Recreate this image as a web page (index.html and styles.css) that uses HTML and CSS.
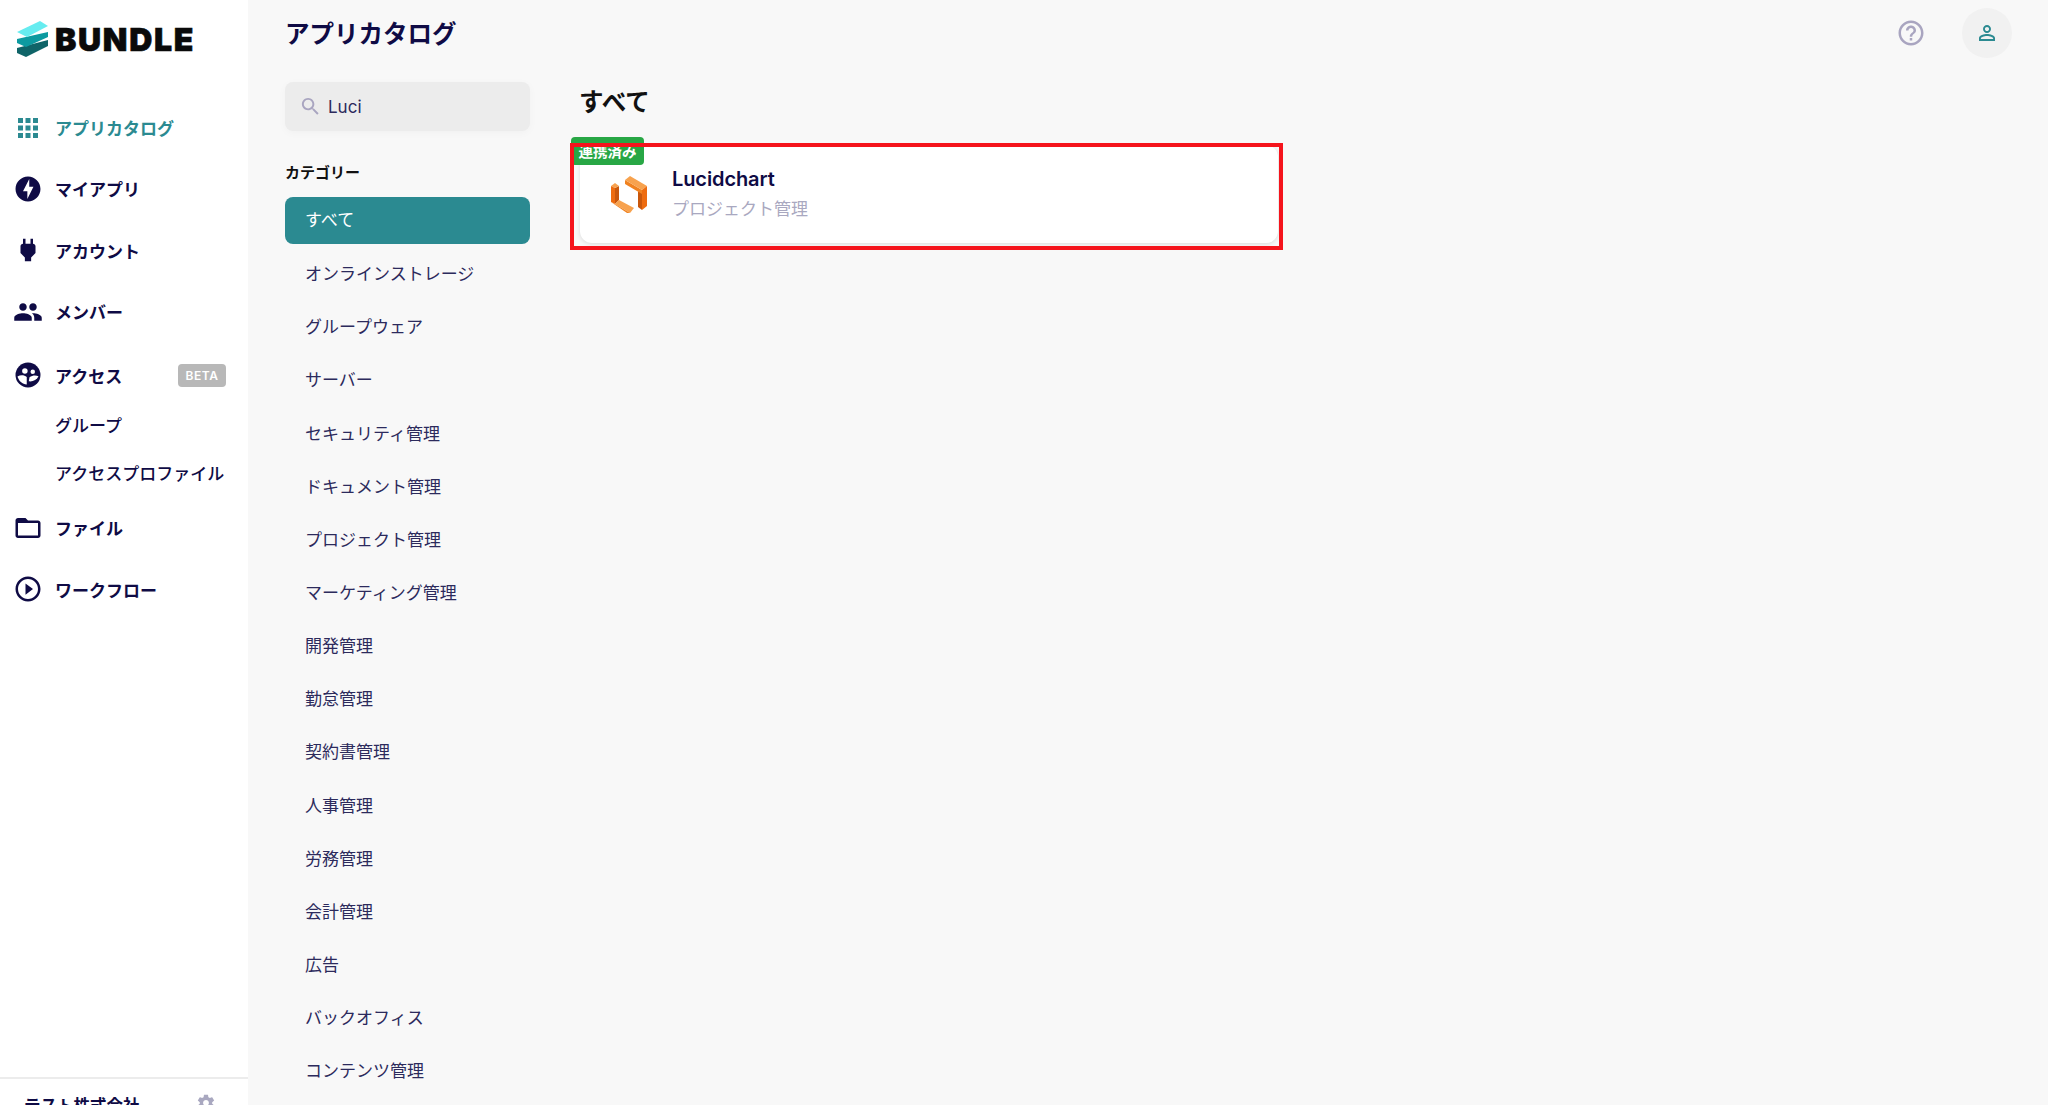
FILE: index.html
```html
<!DOCTYPE html>
<html lang="ja">
<head>
    <meta charset="UTF-8">
    <title>アプリカタログ</title>
    <link rel="stylesheet" href="styles.css">
</head>
<body>
    <aside class="sidebar">
        <div class="logo">
            <svg class="logo-mark" viewBox="0 0 32 36" width="32" height="36">
                <path fill="#0f6468" d="M1 27 L32 19 L32 25 L10 36 L1 32 Z"/>
                <path fill="#0d9aa0" d="M1 18 L32 11 L32 16 L10 26 L1 22 Z"/>
                <path fill="#66ecf0" d="M1 11 L24 0 L32 5 L11 16 Z"/>
            </svg>
            <span class="logo-text">BUNDLE</span>
        </div>
        <nav class="nav">
            <a class="nav-item active">
                <svg class="nav-icon" viewBox="0 0 24 24"><path d="M4 8h4V4H4v4zm6 12h4v-4h-4v4zm-6 0h4v-4H4v4zm0-6h4v-4H4v4zm6 0h4v-4h-4v4zm6-10v4h4V4h-4zm-6 4h4V4h-4v4zm6 6h4v-4h-4v4zm0 6h4v-4h-4v4z"/></svg>
                アプリカタログ
            </a>
            <a class="nav-item">
                <svg class="nav-icon" viewBox="0 0 24 24"><path d="M12 2.02c-5.51 0-9.98 4.47-9.98 9.98s4.47 9.98 9.98 9.98 9.98-4.47 9.98-9.98S17.51 2.02 12 2.02zM11.48 20v-6.26H8L13 4v6.26h3.35L11.48 20z"/></svg>
                マイアプリ
            </a>
            <a class="nav-item">
                <svg class="nav-icon" viewBox="0 0 24 24"><path d="M16.01 7L16 3h-2v4h-4V3H8v4h-.01C7 6.99 6 7.99 6 8.99v5.49L9.5 18v3h5v-3l3.5-3.51v-5.5c0-1-1-2-1.99-1.99z"/></svg>
                アカウント
            </a>
            <a class="nav-item">
                <svg class="nav-icon" viewBox="0 0 24 24"><path d="M16 11c1.66 0 2.99-1.34 2.99-3S17.66 5 16 5c-1.66 0-3 1.34-3 3s1.34 3 3 3zm-8 0c1.66 0 2.99-1.34 2.99-3S9.66 5 8 5C6.34 5 5 6.34 5 8s1.34 3 3 3zm0 2c-2.33 0-7 1.17-7 3.5V19h14v-2.5c0-2.33-4.67-3.5-7-3.5zm8 0c-.29 0-.62.02-.97.05 1.16.84 1.97 1.97 1.97 3.45V19h6v-2.5c0-2.33-4.67-3.5-7-3.5z"/></svg>
                メンバー
            </a>
            <a class="nav-item nav-access">
                <svg class="nav-icon" viewBox="0 0 24 24">
                    <circle cx="12" cy="12" r="10"/>
                    <circle cx="9.5" cy="8.8" r="2.2" fill="#fff"/>
                    <circle cx="15.8" cy="9.4" r="1.8" fill="#fff"/>
                    <path fill="#fff" d="M3.6 13.2 C6 11.8 9 12 11 13.5 L11 19.6 C7.5 19.3 4.5 16.8 3.6 13.2 Z"/>
                    <path fill="#fff" d="M20.4 13 C18.5 12 15.5 12 13.2 13.8 L12.6 17 C15.5 17.6 19 16 20.4 13 Z"/>
                </svg>
                アクセス
                <span class="beta">BETA</span>
            </a>
            <a class="nav-sub">グループ</a>
            <a class="nav-sub">アクセスプロファイル</a>
            <a class="nav-item">
                <svg class="nav-icon" viewBox="0 0 24 24"><path d="M20 6h-8l-2-2H4c-1.1 0-1.99.9-1.99 2L2 18c0 1.1.9 2 2 2h16c1.1 0 2-.9 2-2V8c0-1.1-.9-2-2-2zm0 12H4V8h16v10z"/></svg>
                ファイル
            </a>
            <a class="nav-item">
                <svg class="nav-icon" viewBox="0 0 24 24"><path d="M10 16.5l6-4.5-6-4.5v9zM12 2C6.48 2 2 6.48 2 12s4.48 10 10 10 10-4.48 10-10S17.52 2 12 2zm0 18c-4.41 0-8-3.59-8-8s3.59-8 8-8 8 3.59 8 8-3.59 8-8 8z"/></svg>
                ワークフロー
            </a>
        </nav>
        <div class="org">
            <span>テスト株式会社</span>
            <svg class="org-gear" viewBox="0 0 24 24"><path d="M19.4 13c.04-.32.06-.66.06-1s-.02-.68-.07-1l2.1-1.64c.2-.15.25-.42.13-.64l-2-3.46c-.12-.22-.38-.3-.6-.22l-2.5 1c-.52-.4-1.08-.73-1.69-.98l-.38-2.65C14.46 2.18 14.25 2 14 2h-4c-.25 0-.46.18-.49.42l-.38 2.65c-.61.25-1.17.59-1.69.98l-2.49-1c-.23-.09-.49 0-.61.22l-2 3.46c-.13.22-.07.49.12.64L4.57 11c-.05.32-.07.67-.07 1s.02.68.07 1l-2.11 1.65c-.19.15-.24.42-.12.64l2 3.46c.12.22.38.3.61.22l2.49-1c.52.4 1.08.73 1.69.98l.38 2.65c.03.24.24.42.49.42h4c.25 0 .46-.18.49-.42l.38-2.65c.61-.25 1.17-.59 1.69-.98l2.49 1c.23.09.49 0 .61-.22l2-3.46c.12-.22.07-.49-.12-.64L19.4 13zM12 15.5c-1.93 0-3.5-1.57-3.5-3.5s1.57-3.5 3.5-3.5 3.5 1.57 3.5 3.5-1.57 3.5-3.5 3.5z"/></svg>
        </div>
    </aside>

    <div class="page">
        <header class="topbar">
            <h1>アプリカタログ</h1>
            <div class="top-actions">
                <svg class="help" viewBox="0 0 24 24"><path d="M11 18h2v-2h-2v2zm1-16C6.48 2 2 6.48 2 12s4.48 10 10 10 10-4.48 10-10S17.52 2 12 2zm0 18c-4.41 0-8-3.59-8-8s3.59-8 8-8 8 3.59 8 8-3.59 8-8 8zm0-14c-2.21 0-4 1.79-4 4h2c0-1.1.9-2 2-2s2 .9 2 2c0 2-3 1.75-3 5h2c0-2.25 3-2.5 3-5 0-2.21-1.79-4-4-4z"/></svg>
                <div class="avatar">
                    <svg viewBox="0 0 24 24"><path d="M12 5.9c1.16 0 2.1.94 2.1 2.1s-.94 2.1-2.1 2.1S9.9 9.16 9.9 8s.94-2.1 2.1-2.1m0 9c2.97 0 6.1 1.46 6.1 2.1v1.1H5.9V17c0-.64 3.13-2.1 6.1-2.1M12 4C9.79 4 8 5.79 8 8s1.79 4 4 4 4-1.79 4-4-1.79-4-4-4zm0 9c-2.67 0-8 1.34-8 4v3h16v-3c0-2.66-5.33-4-8-4z"/></svg>
                </div>
            </div>
        </header>
        <div class="content">
            <section class="filters">
                <div class="search">
                    <svg viewBox="0 0 24 24"><path d="M15.5 14h-.79l-.28-.27C15.41 12.59 16 11.11 16 9.5 16 5.91 13.09 3 9.5 3S3 5.91 3 9.5 5.91 16 9.5 16c1.61 0 3.09-.59 4.23-1.57l.27.28v.79l5 4.99L20.49 19l-4.99-5zm-6 0C7.01 14 5 11.99 5 9.5S7.01 5 9.5 5 14 7.01 14 9.5 11.99 14 9.5 14z"/></svg>
                    <span>Luci</span>
                </div>
                <h3>カテゴリー</h3>
                <ul class="cats">
                    <li class="selected">すべて</li>
                    <li>オンラインストレージ</li>
                    <li>グループウェア</li>
                    <li>サーバー</li>
                    <li>セキュリティ管理</li>
                    <li>ドキュメント管理</li>
                    <li>プロジェクト管理</li>
                    <li>マーケティング管理</li>
                    <li>開発管理</li>
                    <li>勤怠管理</li>
                    <li>契約書管理</li>
                    <li>人事管理</li>
                    <li>労務管理</li>
                    <li>会計管理</li>
                    <li>広告</li>
                    <li>バックオフィス</li>
                    <li>コンテンツ管理</li>
                </ul>
            </section>
            <section class="results">
                <h2>すべて</h2>
                <div class="card">
                    <span class="badge">連携済み</span>
                    <svg class="app-icon" viewBox="0 0 36 38" width="36" height="38">
                        <path fill="#c9570c" d="M27 15 L31 17 L31 34 L27 31 Z"/>
                        <path fill="#f08220" d="M14 4 L31 14 L31 18 L14 8 Z"/>
                        <path fill="#f7a24e" d="M14 4 L19 0 L36 10 L31 14 Z"/>
                        <path fill="#ee6c10" d="M31 14 L36 10 L36 30 L31 34 Z"/>
                        <path fill="#c9570c" d="M4 12 L8 10 L8 24 L4 28 Z"/>
                        <path fill="#f7a24e" d="M0 10 L4 7 L8 10 L4 12 Z"/>
                        <path fill="#ee6c10" d="M0 10 L4 12 L4 28 L0 26 Z"/>
                        <path fill="#f7a24e" d="M4 28 L8 24 L23 32 L19 37 Z"/>
                        <path fill="#f08220" d="M0 26 L4 28 L19 37 L16 37 Z"/>
                    </svg>
                    <div class="app-text">
                        <strong>Lucidchart</strong>
                        <span>プロジェクト管理</span>
                    </div>
                    <div class="red-box"></div>
                </div>
            </section>
        </div>
    </div>
</body>
</html>
```

FILE: styles.css
```css
* {
    box-sizing: border-box;
}
html, body {
    height: 100%;
}
body {
    margin: 0;
    display: flex;
    overflow: hidden;
    background-color: #f8f8f8;
    color: #0f0b45;
    font-family: Inter, "Noto Sans CJK JP", sans-serif;
}
.sidebar {
    width: 248px;
    height: 1105px;
    flex: none;
    background-color: #fff;
    display: flex;
    flex-direction: column;
}
.logo {
    display: flex;
    align-items: flex-start;
    gap: 7px;
    padding: 21px 0 0 16px;
    height: 97px;
}
.logo-text {
    font-size: 32px;
    font-weight: 900;
    line-height: 37px;
    color: #0a0a0a;
    letter-spacing: 1.7px;
    -webkit-text-stroke: 0.6px #0a0a0a;
}
.nav-item {
    height: 61.3px;
    display: flex;
    align-items: center;
    padding-left: 13px;
    font-size: 17px;
    font-weight: 700;
    position: relative;
}
.nav-item.active {
    color: #2b8a91;
}
.nav-access {
    margin-top: 2.3px;
}
.nav-access + .nav-sub {
    margin-top: -3.5px;
}
.nav-icon {
    width: 30px;
    height: 30px;
    margin-right: 12px;
    fill: currentColor;
}
.beta {
    margin-left: auto;
    margin-right: 22px;
    width: 48px;
    height: 23px;
    display: flex;
    align-items: center;
    justify-content: center;
    background-color: #b8b8b8;
    color: #fff;
    font-size: 12px;
    font-weight: 600;
    letter-spacing: 0.5px;
    border-radius: 4px;
}
.nav-sub {
    display: block;
    height: 47.5px;
    line-height: 49.5px;
    padding-left: 55px;
    font-size: 17px;
    font-weight: 500;
    white-space: nowrap;
}
.org {
    margin-top: auto;
    border-top: 2px solid #ececec;
    height: 60px;
    flex: none;
    padding: 14px 0 0 24px;
    display: flex;
    justify-content: space-between;
    font-size: 16.5px;
    font-weight: 700;
    margin-bottom: -32px;
}
.org-gear {
    width: 20px;
    height: 20px;
    margin-right: 32px;
    fill: #a9a8c0;
}
.page {
    flex: 1;
    min-width: 0;
}
.topbar {
    display: flex;
    justify-content: space-between;
    align-items: center;
    padding: 0 36px 0 37px;
    height: 66px;
}
h1 {
    margin: 0 0 2px;
    font-size: 24.5px;
    font-weight: 700;
}
.top-actions {
    display: flex;
    align-items: center;
    gap: 36px;
}
.help {
    width: 30px;
    height: 30px;
    fill: #a9a5c0;
}
.avatar {
    width: 50px;
    height: 50px;
    border-radius: 50%;
    background-color: #f1f1f1;
    display: flex;
    align-items: center;
    justify-content: center;
}
.avatar svg {
    width: 24px;
    height: 24px;
    fill: #2b8a91;
}
.content {
    display: flex;
    padding: 16px 0 0 37px;
}
.filters {
    width: 245px;
    flex: none;
}
.search {
    height: 49px;
    background-color: #ececec;
    border-radius: 8px;
    display: flex;
    align-items: center;
    gap: 6px;
    padding-left: 14px;
    font-size: 17px;
    color: #2c2a5c;
    box-shadow: 0 2px 8px rgba(0, 0, 0, 0.03);
}
.search svg {
    width: 23px;
    height: 23px;
    fill: #a9a5c0;
}
h3 {
    margin: 31px 0 0;
    font-size: 15px;
    font-weight: 700;
    line-height: 22px;
    color: #111;
}
.cats {
    list-style: none;
    margin: 13px 0 0;
    padding: 0;
}
.cats li {
    height: 47px;
    line-height: 49px;
    margin-bottom: 6.15px;
    padding-left: 20px;
    font-size: 17px;
    color: #2c2a5c;
    white-space: nowrap;
}
.cats li.selected {
    background-color: #2b8a91;
    color: #fff;
    border-radius: 8px;
    line-height: 47px;
}
.results {
    margin-left: 50px;
    width: 698px;
}
h2 {
    margin: 3px 0 0 -1px;
    font-size: 24.5px;
    font-weight: 700;
    line-height: 34px;
    color: #111;
}
.card {
    position: relative;
    margin-top: 26px;
    height: 98px;
    background-color: #fff;
    border-radius: 12px;
    box-shadow: 0 1px 4px rgba(0, 0, 0, 0.12);
    display: flex;
    align-items: center;
    padding: 1px 0 0 31px;
}
.badge {
    position: absolute;
    left: -9px;
    top: -8px;
    width: 73px;
    height: 28px;
    line-height: 30px;
    text-align: center;
    background-color: #28a745;
    color: #fff;
    font-size: 14.5px;
    font-weight: 700;
    border-radius: 4px;
}
.app-icon {
    flex: none;
    margin-right: 25px;
}
.app-text {
    display: flex;
    flex-direction: column;
    gap: 4px;
    margin-bottom: 2px;
}
.app-text strong {
    font-size: 20px;
    font-weight: 600;
    line-height: 26px;
    letter-spacing: -0.1px;
}
.app-text span {
    font-size: 17px;
    line-height: 26px;
    color: #a9a8c0;
}
.red-box {
    position: absolute;
    left: -10px;
    top: -2px;
    width: 713px;
    height: 107px;
    border: 4px solid #f5141c;
}
```
